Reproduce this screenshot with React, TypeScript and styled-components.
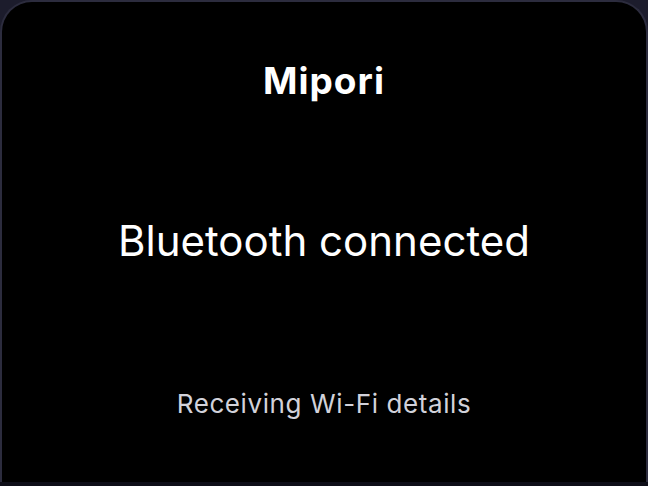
import React from 'react';
import styled, { createGlobalStyle } from 'styled-components';

const GlobalStyle = createGlobalStyle`
  html, body {
    margin: 0;
    padding: 0;
    background: #0e0e18;
  }
  body {
    font-family: Inter, "Liberation Sans", Arial, sans-serif;
  }
`;

const Page = styled.div`
  width: 648px;
  height: 486px;
  background: #1c1c2c;
  display: flex;
  flex-direction: column;
`;

const Panel = styled.main`
  box-sizing: border-box;
  height: 482px;
  background: #000;
  border: 2px solid #2c2c3e;
  border-bottom: none;
  border-radius: 32px 32px 0 0;
  display: flex;
  flex-direction: column;
  align-items: center;
  padding-top: 57px;
`;

const Footer = styled.div`
  flex: 1;
  background: #0e0e18;
`;

const Title = styled.h1`
  margin: 0;
  font-size: 37px;
  font-weight: 700;
  letter-spacing: 1px;
  color: #fff;
  line-height: 44px;
`;

const Status = styled.h2`
  margin: 112px 0 0;
  font-size: 42px;
  font-weight: 400;
  color: #fff;
  line-height: 52px;
`;

const Detail = styled.p`
  margin: 121px 0 0;
  font-size: 26px;
  font-weight: 400;
  letter-spacing: 0.6px;
  color: #d2d2da;
  line-height: 32px;
`;

export default function App() {
  return (
    <>
      <GlobalStyle />
      <Page>
        <Panel>
          <Title>Mipori</Title>
          <Status>Bluetooth connected</Status>
          <Detail>Receiving Wi-Fi details</Detail>
        </Panel>
        <Footer />
      </Page>
    </>
  );
}
